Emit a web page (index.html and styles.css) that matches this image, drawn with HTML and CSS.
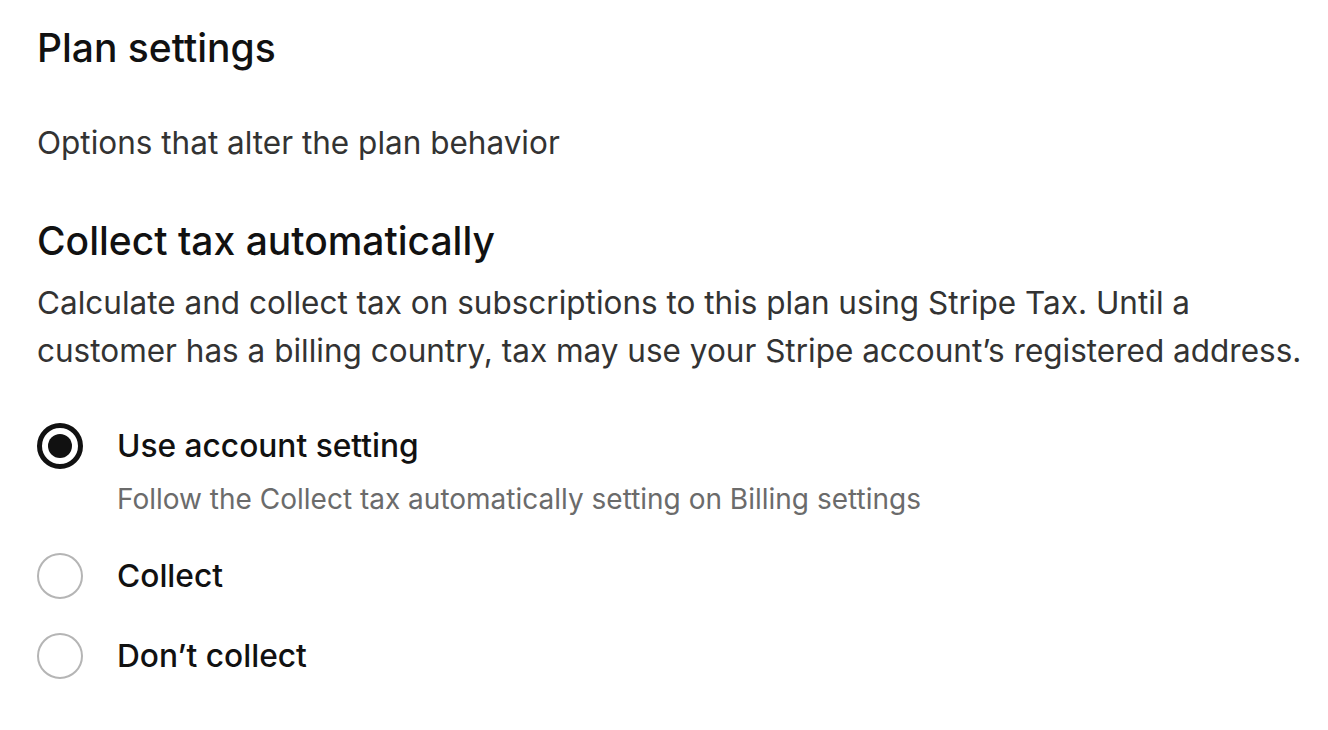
FILE: index.html
```html
<!DOCTYPE html>
<html lang="en">
<head>
    <meta charset="UTF-8">
    <meta name="viewport" content="width=device-width, initial-scale=1.0">
    <title>Plan settings</title>
    <link rel="stylesheet" href="styles.css">
</head>
<body>
    <div class="section">
        <h1>Plan settings</h1>
        <p class="lead">Options that alter the plan behavior</p>

        <h2>Collect tax automatically</h2>
        <p class="desc">Calculate and collect tax on subscriptions to this plan using Stripe Tax. Until a customer has a billing country, tax may use your Stripe account’s registered address.</p>

        <div class="options">
            <label class="option">
                <input type="radio" name="tax" checked>
                <span class="radio"></span>
                <span class="text">
                    <span class="label">Use account setting</span>
                    <span class="hint">Follow the Collect tax automatically setting on Billing settings</span>
                </span>
            </label>
            <label class="option">
                <input type="radio" name="tax">
                <span class="radio"></span>
                <span class="text">
                    <span class="label">Collect</span>
                </span>
            </label>
            <label class="option">
                <input type="radio" name="tax">
                <span class="radio"></span>
                <span class="text">
                    <span class="label">Don’t collect</span>
                </span>
            </label>
        </div>
    </div>
</body>
</html>
```

FILE: styles.css
```css
body {
    font-family: Inter, 'Noto Sans', sans-serif;
    margin: 0;
    padding: 0 10px 0 37px;
    background: #fff;
    color: #1a1a1a;
}
.section {
    padding-top: 24px;
}
h1 {
    font-size: 39px;
    font-weight: 500;
    line-height: 48px;
    margin: 0;
    color: #111;
}
.lead {
    font-size: 31.5px;
    line-height: 48px;
    margin: 47px 0 0;
    color: #333;
}
h2 {
    font-size: 39px;
    font-weight: 500;
    line-height: 48px;
    margin: 50px 0 0;
    color: #111;
}
.desc {
    font-size: 31.5px;
    line-height: 48px;
    margin: 14px 0 0;
    color: #333;
}
.options {
    display: flex;
    flex-direction: column;
    gap: 34px;
    margin-top: 48px;
}
.option {
    display: flex;
    align-items: flex-start;
    gap: 34px;
    cursor: pointer;
}
.option input {
    display: none;
}
.radio {
    flex: none;
    width: 46px;
    height: 46px;
    box-sizing: border-box;
    border-radius: 50%;
    border: 2px solid #b5b5b5;
    display: flex;
    align-items: center;
    justify-content: center;
}
.option input:checked + .radio {
    border: 5px solid #111;
}
.option input:checked + .radio::after {
    content: "";
    width: 24px;
    height: 24px;
    border-radius: 50%;
    background: #111;
}
.text {
    display: flex;
    flex-direction: column;
}
.label {
    font-size: 31.7px;
    font-weight: 500;
    line-height: 46px;
    color: #111;
}
.hint {
    font-size: 28px;
    line-height: 40px;
    margin-top: 10px;
    color: #6b6b6b;
}
```
